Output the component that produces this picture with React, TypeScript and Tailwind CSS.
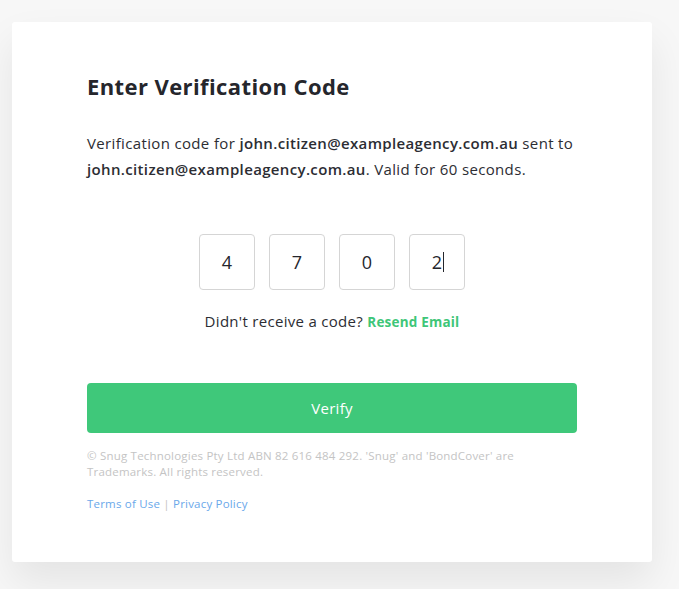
import React from "react";

export default function App() {
  const digits = ["4", "7", "0", "2"];
  return (
    <div
      className="w-[679px] h-[589px] overflow-hidden bg-[#f7f7f7] pt-[22px] pl-[12px]"
      style={{ fontFamily: "'Open Sans', sans-serif" }}
    >
      <div className="w-[640px] h-[540px] bg-white rounded-[3px] shadow-[0_20px_40px_rgba(0,0,0,0.08)] px-[75px] pt-[49px]">
        <h1 className="text-[22px] leading-[30px] font-bold text-[#25262c] tracking-[0.4px]">
          Enter Verification Code
        </h1>
        <p className="mt-[29px] text-[15px] leading-[26px] text-[#2c2d33] tracking-[0.35px]">
          Verification code for <span className="font-semibold">john.citizen@exampleagency.com.au</span> sent to{" "}
          <span className="font-semibold">john.citizen@exampleagency.com.au</span>. Valid for 60 seconds.
        </p>
        <div className="mt-[52px] flex justify-center gap-[14px]">
          {digits.map((d, i) => (
            <div
              key={i}
              className="w-[56px] h-[56px] border border-[#d5d5d5] rounded-[4px] flex items-center justify-center text-[18px] text-[#25262c]"
            >
              <span className="relative">
                {d}
                {i === 3 && (
                  <span className="absolute right-[-2px] top-[3px] w-[1px] h-[20px] bg-[#25262c]" />
                )}
              </span>
            </div>
          ))}
        </div>
        <div className="mt-[21px] text-center text-[15px] leading-[20px] text-[#2c2d33] tracking-[0.3px]">
          Didn't receive a code?{" "}
          <span className="text-[13.5px] font-bold text-[#3ec678] tracking-[0.2px]">Resend Email</span>
        </div>
        <button className="mt-[51px] w-full h-[50px] rounded-[4px] bg-[#3fc87a] text-white text-[15px] font-medium tracking-[0.3px]">
          Verify
        </button>
        <p className="mt-[15px] text-[11.5px] leading-[16px] text-[#c4c4c4] pr-[40px] tracking-[0.2px]">
          © Snug Technologies Pty Ltd ABN 82 616 484 292. 'Snug' and 'BondCover' are Trademarks. All rights reserved.
        </p>
        <div className="mt-[16px] text-[11.5px] leading-[16px] tracking-[0.2px]">
          <span className="text-[#6aa8ea]">Terms of Use</span>
          <span className="text-[#c4c4c4]"> | </span>
          <span className="text-[#6aa8ea]">Privacy Policy</span>
        </div>
      </div>
    </div>
  );
}
